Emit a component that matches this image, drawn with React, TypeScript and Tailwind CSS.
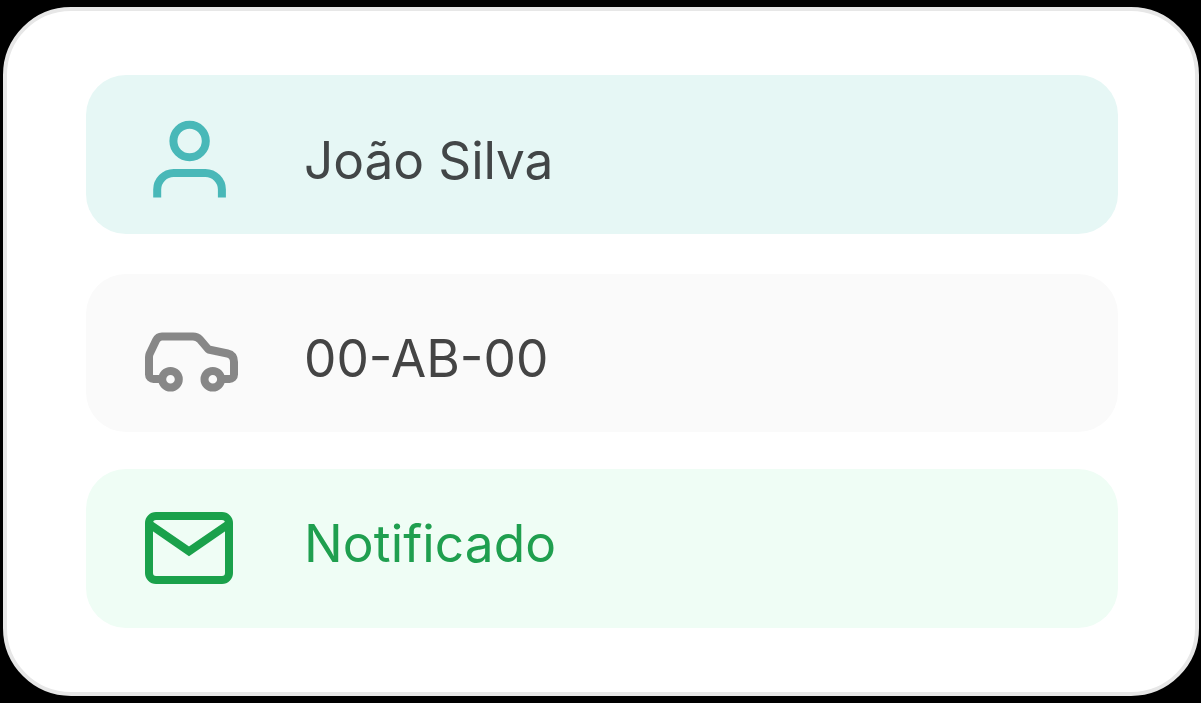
import React from 'react';

interface InfoRow {
  key: string;
  label: string;
  icon: React.ReactNode;
  rowClass: string;
  labelClass: string;
}

function UserIcon() {
  return (
    <svg width="88" height="88" viewBox="145 110 88 88" fill="none" stroke="#49b8b8" strokeWidth="8">
      <circle cx="189.6" cy="141" r="16.2" />
      <path d="M157.2 197.5V189.5a16.5 16.5 0 0 1 16.5-16.5h31.7a16.5 16.5 0 0 1 16.5 16.5v8" />
    </svg>
  );
}

function CarIcon() {
  return (
    <svg
      width="94"
      height="62"
      viewBox="145 331 94 62"
      fill="none"
      stroke="#878787"
      strokeWidth="8"
      strokeLinejoin="round"
    >
      <path d="M162 379h-8.500a4.500 4.500 0 0 1-4.500-4.500V357q0-1.800 0.800-3.600L156 340.500q2-4 6-4H193q4 0 7 3l8.500 10 19 4q6.500 1.500 6.500 8.500V374.500a4.500 4.500 0 0 1-4.500 4.500h-8.500" />
      <circle cx="170.500" cy="379.200" r="8.300" />
      <circle cx="212.800" cy="379.200" r="8.300" />
    </svg>
  );
}

function MailIcon() {
  return (
    <svg width="88" height="72" viewBox="145 512 88 72" fill="none" stroke="#1aa14b" strokeWidth="8">
      <rect x="149" y="516" width="80" height="64" rx="7" />
      <path d="M150 524.500L189 551.300L228 524.500" />
    </svg>
  );
}

const ROWS: InfoRow[] = [
  {
    key: 'name',
    label: 'João Silva',
    icon: <UserIcon />,
    rowClass: 'mb-10 h-[159px] bg-[#e6f7f5] pt-[35px]',
    labelClass: 'pt-[18px] tracking-[-0.1px] text-[#424647]',
  },
  {
    key: 'plate',
    label: '00-AB-00',
    icon: <CarIcon />,
    rowClass: 'mb-[37px] h-[158px] bg-[#fafafa] pt-[57px]',
    labelClass: '-mt-[5px] text-[#444444]',
  },
  {
    key: 'status',
    label: 'Notificado',
    icon: <MailIcon />,
    rowClass: 'h-[159px] bg-[#effdf5] pt-[43px]',
    labelClass: '-mt-px tracking-[0.1px] text-[#1f9f4f]',
  },
];

export default function App() {
  return (
    <main className="h-[703px] w-[1201px] overflow-hidden bg-black pt-[7px] pl-[3px]">
      <section className="h-[689px] w-[1196px] rounded-[68px] border-4 border-[#e7e7e7] bg-white pt-16 pl-[79px] font-['Inter',sans-serif]">
        {ROWS.map((row) => (
          <div
            key={row.key}
            className={`flex w-[1032px] items-start rounded-[40px] pl-[59px] ${row.rowClass}`}
          >
            <div className="w-[159px] shrink-0">{row.icon}</div>
            <span className={`text-[51.4px] leading-[64px] whitespace-nowrap ${row.labelClass}`}>
              {row.label}
            </span>
          </div>
        ))}
      </section>
    </main>
  );
}
